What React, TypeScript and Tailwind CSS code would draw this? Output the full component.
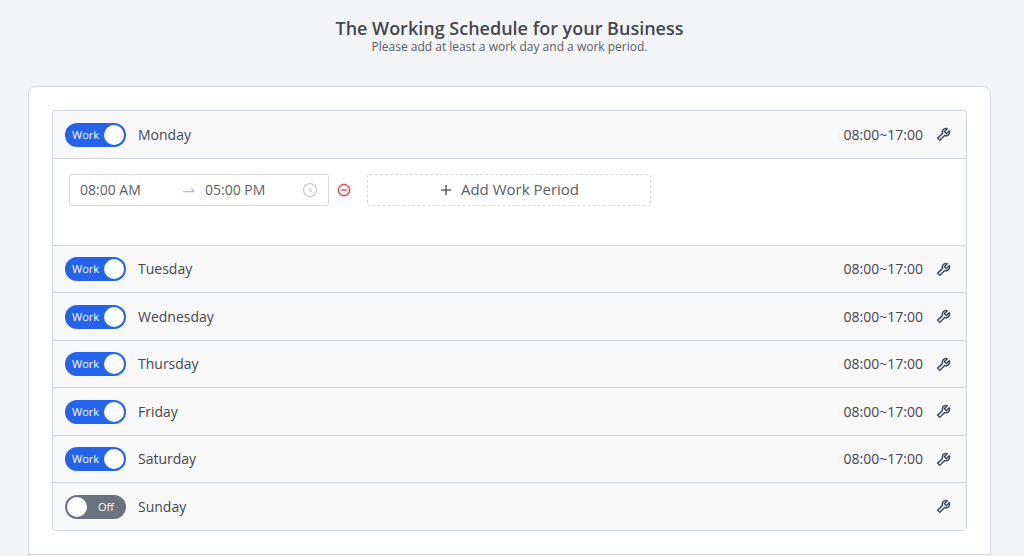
import {useState} from "react";
import {
    AiOutlineClockCircle,
    AiOutlineMinusCircle,
    AiOutlinePlus,
    AiOutlineSwapRight,
    AiOutlineTool,
} from "react-icons/ai";

type Day = {
    id: number;
    name: string;
    hours: string;
    works: boolean;
};

const initialDays: Day[] = [
    {id: 1, name: "Monday", hours: "08:00~17:00", works: true},
    {id: 2, name: "Tuesday", hours: "08:00~17:00", works: true},
    {id: 3, name: "Wednesday", hours: "08:00~17:00", works: true},
    {id: 4, name: "Thursday", hours: "08:00~17:00", works: true},
    {id: 5, name: "Friday", hours: "08:00~17:00", works: true},
    {id: 6, name: "Saturday", hours: "08:00~17:00", works: true},
    {id: 7, name: "Sunday", hours: "08:00~17:00", works: false},
];

const DaySwitch = ({day, onChange}: { day: Day; onChange: () => void }) => (
    <label className="flex items-center gap-3 cursor-pointer">
        <input type="checkbox" role="switch" className="peer sr-only" checked={day.works} onChange={onChange}/>
        <span
            aria-hidden="true"
            className={`flex items-center justify-between w-[61px] h-6 p-[2px] rounded-full text-[11px] font-medium text-white peer-focus-visible:ring-2 ${
                day.works ? "bg-[#2563eb] pl-[7px]" : "bg-[#6b7280] flex-row-reverse pr-3"
            }`}
        >
            <span>{day.works ? "Work" : "Off"}</span>
            <span className="size-5 rounded-full bg-white"/>
        </span>
        <span>{day.name}</span>
    </label>
);

const WorkPeriods = () => (
    <div className="flex items-start h-[87px] px-4 pt-[15px] border-b border-gray-300 bg-white">
        <div className="flex items-center w-[260px] h-8 px-[10px] border border-[#d9d9d9] rounded-[3px]">
            <input aria-label="Start time" defaultValue="08:00 AM" className="w-[93px] min-w-0 outline-none"/>
            <AiOutlineSwapRight className="mx-2 shrink-0 text-base text-[#bfbfbf]"/>
            <input aria-label="End time" defaultValue="05:00 PM" className="flex-1 min-w-0 outline-none"/>
            <AiOutlineClockCircle className="shrink-0 text-base text-[#c8c8c8]"/>
        </div>
        <button type="button" aria-label="Remove period" className="flex items-center h-8 px-2 text-[#ef4444]">
            <AiOutlineMinusCircle className="text-sm stroke-current stroke-[30]"/>
        </button>
        <button
            type="button"
            className="flex items-center justify-center gap-2 w-[284px] h-8 ml-2 border border-dashed border-[#d9d9d9] rounded-[3px] text-[15px]"
        >
            <AiOutlinePlus className="text-sm stroke-current stroke-[30]"/>
            Add Work Period
        </button>
    </div>
);

const App = () => {
    const [days, setDays] = useState(initialDays);
    const [openId, setOpenId] = useState(1);

    const toggleDay = (id: number) => {
        setDays(days.map(day => (day.id === id ? {...day, works: !day.works} : day)));
    };

    return (
        <main
            className="min-h-screen pl-7 pr-[33px] pt-[17px] bg-gray-100 font-['Open_Sans','Noto_Sans',sans-serif] text-sm text-[#5a5d63]">
            <header className="mb-[31px] text-center">
                <h1 className="text-lg leading-[22px] font-semibold text-[#44474d]">The Working Schedule for your Business</h1>
                <p className="text-xs">Please add at least a work day and a work period.</p>
            </header>

            <section className="border border-gray-300 rounded-t-lg bg-white">
                <div className="p-[23px] border-b border-gray-300">
                    <ul className="border border-b-0 border-gray-300 rounded overflow-hidden">
                        {days.map(day => (
                            <li key={day.id} className="group">
                                <div
                                    className="flex items-center justify-between h-12 group-even:h-[47px] px-3 border-b border-gray-300 bg-[#f8f8f8] text-[#44474d]">
                                    <DaySwitch day={day} onChange={() => toggleDay(day.id)}/>
                                    <div className="flex items-center gap-3">
                                        {day.works && <span>{day.hours}</span>}
                                        <button
                                            type="button"
                                            aria-label={`Edit ${day.name}`}
                                            className="pr-[2px]"
                                            onClick={() => setOpenId(day.id)}
                                        >
                                            <AiOutlineTool className="text-[17px] text-[#374151] stroke-current stroke-[15]"/>
                                        </button>
                                    </div>
                                </div>
                                {openId === day.id && <WorkPeriods/>}
                            </li>
                        ))}
                    </ul>
                </div>
                <div className="h-6"/>
            </section>
        </main>
    );
};

export default App;
